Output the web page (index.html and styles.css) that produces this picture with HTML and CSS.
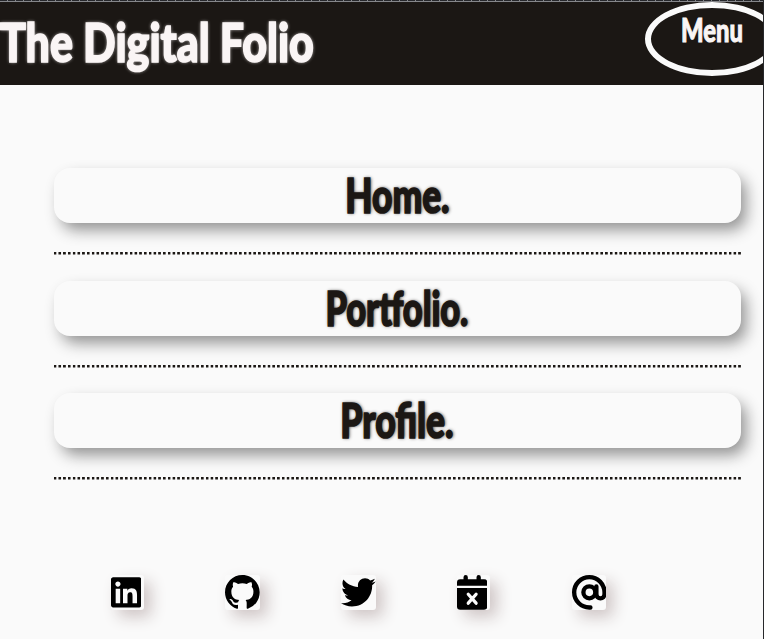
FILE: index.html
```html
<!DOCTYPE html>
<html lang="en">
<head>
<meta charset="utf-8">
<title>The Digital Folio</title>
<link rel="stylesheet" href="styles.css">
</head>
<body>
<header class="header">
  <h1 class="title"><span class="lettering">The Digital Folio</span></h1>
  <button class="menu-button"><span class="lettering">Menu</span></button>
</header>
<main class="main">
  <nav class="nav">
    <div class="entry"><a class="card home"><span class="lettering">Home.</span></a></div>
    <div class="entry"><a class="card portfolio"><span class="lettering">Portfolio.</span></a></div>
    <div class="entry"><a class="card profile"><span class="lettering">Profile.</span></a></div>
  </nav>
  <div class="social">
    <a class="icon narrow" aria-label="LinkedIn"><svg viewBox="0 0 448 512"><path d="M416 32H31.9C14.3 32 0 46.5 0 64.3v383.4C0 465.5 14.3 480 31.9 480H416c17.6 0 32-14.5 32-32.3V64.3c0-17.8-14.4-32.3-32-32.3zM135.4 416H69V202.2h66.5V416zm-33.2-243c-21.3 0-38.5-17.3-38.5-38.5S80.9 96 102.2 96c21.2 0 38.5 17.3 38.5 38.5 0 21.3-17.2 38.5-38.5 38.5zm282.1 243h-66.4V312c0-24.8-.5-56.7-34.5-56.7-34.6 0-39.9 27-39.9 54.9V416h-66.4V202.2h63.7v29.2h.9c8.9-16.8 30.6-34.5 62.9-34.5 67.2 0 79.7 44.3 79.7 101.9V416z"/></svg></a>
    <a class="icon" aria-label="GitHub"><svg viewBox="0 0 16 16"><path d="M8 0C3.58 0 0 3.58 0 8c0 3.54 2.29 6.53 5.47 7.59.4.07.55-.17.55-.38 0-.19-.01-.82-.01-1.49-2.01.37-2.53-.49-2.69-.94-.09-.23-.48-.94-.82-1.13-.28-.15-.68-.52-.01-.53.63-.01 1.08.58 1.23.82.72 1.21 1.87.87 2.33.66.07-.52.28-.87.51-1.07-1.78-.2-3.64-.89-3.64-3.95 0-.87.31-1.59.82-2.15-.08-.2-.36-1.02.08-2.12 0 0 .67-.21 2.2.82.64-.18 1.32-.27 2-.27s1.36.09 2 .27c1.53-1.04 2.2-.82 2.2-.82.44 1.1.16 1.92.08 2.12.51.56.82 1.27.82 2.15 0 3.07-1.87 3.75-3.65 3.95.29.25.54.73.54 1.48 0 1.07-.01 1.93-.01 2.2 0 .21.15.46.55.38A8.01 8.01 0 0 0 16 8c0-4.42-3.58-8-8-8z"/></svg></a>
    <a class="icon" aria-label="Twitter"><svg viewBox="0 0 512 512"><path d="M459.37 151.716c.325 4.548.325 9.097.325 13.645 0 138.72-105.583 298.558-298.558 298.558-59.452 0-114.68-17.219-161.137-47.106 8.447.974 16.568 1.299 25.34 1.299 49.055 0 94.213-16.568 130.274-44.832-46.132-.975-84.792-31.188-98.112-72.772 6.498.974 12.995 1.624 19.818 1.624 9.421 0 18.843-1.3 27.614-3.573-48.081-9.747-84.143-51.98-84.143-102.985v-1.299c13.969 7.797 30.214 12.67 47.431 13.319-28.264-18.843-46.781-51.005-46.781-87.391 0-19.492 5.197-37.36 14.294-52.954 51.655 63.675 129.3 105.258 216.365 109.807-1.624-7.797-2.599-15.918-2.599-24.04 0-57.828 46.782-104.934 104.934-104.934 30.213 0 57.502 12.67 76.67 33.137 23.715-4.548 46.456-13.32 66.599-25.34-7.798 24.366-24.366 44.833-46.132 57.827 21.117-2.273 41.584-8.122 60.426-16.243-14.292 20.791-32.161 39.308-52.628 54.253z"/></svg></a>
    <a class="icon narrow" aria-label="Calendar"><svg viewBox="0 0 448 512"><path d="M0 160v-48a48 48 0 0 1 48-48H96V32a32 32 0 0 1 64 0v32H288V32a32 32 0 0 1 64 0v32h48a48 48 0 0 1 48 48v48zM0 192H448V464a48 48 0 0 1-48 48H48a48 48 0 0 1-48-48z"/><path class="cross" d="M166 284l116 132M282 284L166 416"/></svg></a>
    <a class="icon" aria-label="Email"><svg viewBox="0 0 512 512"><path class="at" d="M272 480H256A224 224 0 1 1 480 256v28a60 60 0 0 1-120 0V168"/><circle class="at" cx="256" cy="256" r="88"/></svg></a>
  </div>
</main>
</body>
</html>
```
FILE: styles.css
```css
* { box-sizing: border-box; }

body {
  margin: 0;
  width: 764px;
  height: 639px;
  overflow: hidden;
  border-right: 1px solid #27282b;
  background: #fafafa;
  color: #1b1714;
  font-family: Lato, "Liberation Sans", sans-serif;
}

.header {
  display: flex;
  justify-content: space-between;
  height: 85px;
  overflow: hidden;
  background:
    repeating-linear-gradient(90deg, #25262a 0 7px, #85868a 7px 8px) 0 0 / 100% 1px no-repeat,
    linear-gradient(#85868a, #85868a) 0 1px / 100% 1px no-repeat,
    #1b1714;
}

.lettering {
  display: block;
  white-space: nowrap;
  font-weight: 900;
  -webkit-text-stroke: 1.6px currentColor;
}

.title {
  width: 313px;
  margin: 9px 0 0;
  color: #faf5f5;
  font-size: 54px;
  line-height: 66px;
  text-shadow: 0 0 4px #faf5f5;
}

.title .lettering {
  transform: scaleX(.795);
  transform-origin: 0 50%;
}

.menu-button {
  flex: none;
  display: flex;
  justify-content: center;
  width: 134px;
  height: 74px;
  margin: 2px -16px 0 0;
  padding: 2px 0 0;
  border: 6px solid #fafafa;
  border-radius: 50%;
  background: none;
  color: #faf5f5;
  font: 900 33px/38px Lato, "Liberation Sans", sans-serif;
}

.menu-button .lettering {
  transform: scaleX(.72);
  -webkit-text-stroke-width: 1px;
}

.main { padding: 83px 22.4px 0 54px; }

.nav {
  display: grid;
  grid-auto-rows: 112.6px;
}

.entry {
  background: repeating-linear-gradient(90deg, #1b1714 0 1.8px, #fafafa 2.8px 4.2px, #1b1714 4.754px) 0 84px / 100% 2.5px no-repeat;
}

.card {
  display: flex;
  justify-content: center;
  height: 55px;
  border-radius: 16px;
  background: #fafafa;
  box-shadow: 6px 8px 15px -1px #929292;
  font-size: 47px;
  line-height: 54px;
  text-shadow: 1px 0 4px #1b1714;
}

.home .lettering { transform: scaleX(.75); }
.portfolio .lettering { transform: scaleX(.73); }
.profile .lettering { transform: scaleX(.755); }

.social {
  display: flex;
  gap: 81.2px;
  margin: 69.7px 0 0 56.5px;
}

.icon {
  width: 34.7px;
  height: 34.7px;
  border-radius: 3px;
  background: #fafafa;
  box-shadow: 7px 7px 15px #cfc6c6;
}

.narrow {
  width: 33px;
  margin-right: .5px;
}

.icon svg {
  display: block;
  height: 34.7px;
}

.cross, .at {
  fill: none;
  stroke: #000;
  stroke-width: 64;
  stroke-linecap: round;
}

.cross {
  stroke: #fafafa;
  stroke-width: 48;
}
```
